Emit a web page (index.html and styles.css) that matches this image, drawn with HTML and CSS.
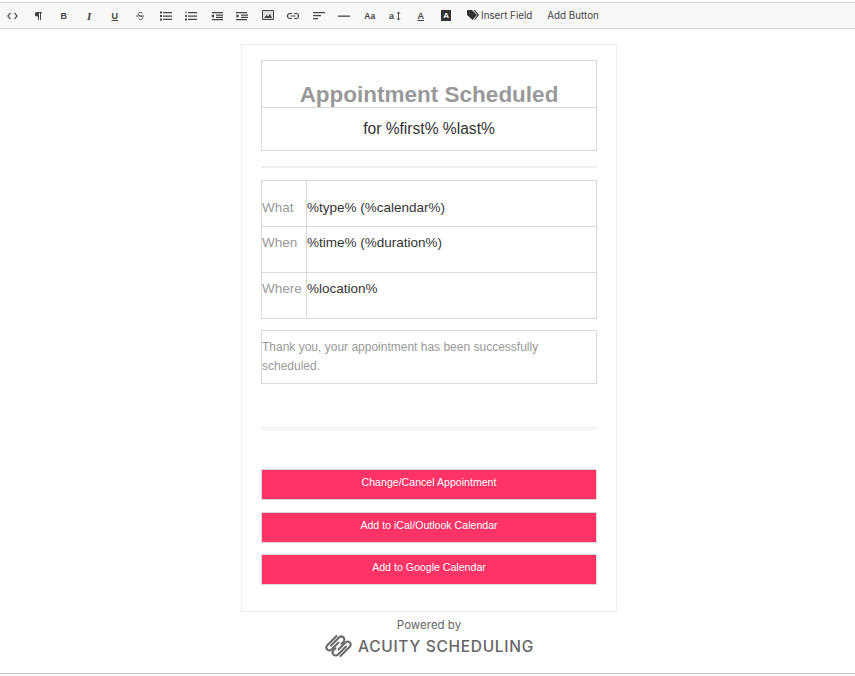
FILE: index.html
```html
<!DOCTYPE html>
<html lang="en">
  <head>
    <meta charset="UTF-8" />
    <meta name="viewport" content="width=device-width, initial-scale=1.0" />
    <title>Confirmation Page Editor</title>
    <link rel="stylesheet" href="styles.css">
  </head>

  <body>
    <div class="toolbar">
      <span class="tool">
        <svg width="11" height="8" viewBox="0 0 11 8" fill="none" stroke="#555" stroke-width="1.200"><path d="M3.500 1L.8 4l2.700 3M7.500 1l2.700 3-2.700 3"/></svg>
      </span>
      <span class="tool">
        <svg width="12" height="12" viewBox="0 0 12 12"><path d="M5 2h5v1H9v7H8V3H7v7H6V6.500H5a2.200 2.200 0 0 1 0-4.500z" fill="#444"/></svg>
      </span>
      <span class="tool tool-letter">B</span>
      <span class="tool tool-letter tool-i">I</span>
      <span class="tool tool-letter tool-u">U</span>
      <span class="tool">
        <svg width="12" height="12" viewBox="0 0 12 12" fill="none" stroke="#555"><path d="M8.500 3.500C8 2.300 6 2 5 2.700S3.800 4.700 5 5.300L8 6.700c1 .6 .8 1.800 0 2.400S5 9.800 4.500 8.500M2 6h8"/></svg>
      </span>
      <span class="tool">
        <svg width="12" height="12" viewBox="0 0 12 12" fill="#444"><path d="M0 1.500h2v2H0zM0 5h2v2H0zM0 8.500h2v2H0zM3 2h9v1.300H3zM3 5.400h9v1.300H3zM3 8.800h9v1.300H3z"/></svg>
      </span>
      <span class="tool">
        <svg width="12" height="12" viewBox="0 0 12 12" fill="#444"><path d="M.5 1.500h1v2h-1zM0 5h2v.7H.8v.6H2V7H0zM0 8.500h2v2H0zM3 2h9v1.300H3zM3 5.400h9v1.300H3zM3 8.800h9v1.300H3z"/></svg>
      </span>
      <span class="tool">
        <svg width="12" height="12" viewBox="0 0 12 12" fill="#444"><path d="M1 2h11v1.300H1zM5 4.400h7v1.300H5zM5 6.700h7V8H5zM1 9h11v1.300H1zM0 6l3-2v4z"/></svg>
      </span>
      <span class="tool">
        <svg width="12" height="12" viewBox="0 0 12 12" fill="#444"><path d="M0 2h11v1.300H0zM5 4.400h7v1.300H5zM5 6.700h7V8H5zM0 9h11v1.300H0zM3.500 6l-3-2v4z"/></svg>
      </span>
      <span class="tool">
        <svg width="12" height="11" viewBox="0 0 12 11"><path d="M.5.500h11v9H.5z" fill="#ddd" stroke="#444"/><path d="M2 8l2.500-3 1.500 1.500L8 4l2 4z" fill="#444"/></svg>
      </span>
      <span class="tool">
        <svg width="12" height="12" viewBox="0 0 12 12" fill="none" stroke="#444" stroke-width="1.200"><path d="M5 3.500H3a2.500 2.500 0 0 0 0 5h2M7 3.500h2a2.500 2.500 0 0 1 0 5H7M3.500 6h5"/></svg>
      </span>
      <span class="tool">
        <svg width="12" height="12" viewBox="0 0 12 12" fill="#444"><path d="M0 2h12v1.300H0zM0 5h8v1.300H0zM0 8h5v1.300H0z"/></svg>
      </span>
      <span class="tool">
        <svg width="12" height="12" viewBox="0 0 12 12" fill="#444"><path d="M0 5.500h12v1.300H0z"/></svg>
      </span>
      <span class="tool tool-aa">Aa</span>
      <span class="tool">
        <svg width="13" height="12" viewBox="0 0 13 12"><text x="0" y="9" class="tool-svg-text">a</text><path d="M9.500 1.500l2 2H10v5h1.500l-2 2-2-2H9v-5H7.500z" fill="#555"/></svg>
      </span>
      <span class="tool tool-letter tool-color">A</span>
      <span class="tool"><span class="tool-bg">A</span></span>
      <span class="tool-text tool-field">
        <svg width="12" height="11" viewBox="0 0 12 11" fill="#333"><path d="M0 0h5l5 5-4.500 5L0 5zM6.500 0H8l4 5-4 5H7l3.500-5z"/></svg>
        Insert Field
      </span>
      <span class="tool-text tool-add">Add Button</span>
    </div>

    <div class="page">
      <div class="card">
        <div class="heading-box">
          <h1 class="heading-title">Appointment Scheduled</h1>
          <p class="heading-sub">for %first% %last%</p>
        </div>

        <hr class="rule" />

        <table class="details">
          <tr class="row-first">
            <td class="label">What</td>
            <td>%type% (%calendar%)</td>
          </tr>
          <tr>
            <td class="label">When</td>
            <td>%time% (%duration%)</td>
          </tr>
          <tr>
            <td class="label">Where</td>
            <td>%location%</td>
          </tr>
        </table>

        <p class="thanks">Thank you, your appointment has been successfully scheduled.</p>

        <hr class="rule-double" />

        <div class="buttons">
          <a class="btn" href="#">Change/Cancel Appointment</a>
          <a class="btn" href="#">Add to iCal/Outlook Calendar</a>
          <a class="btn" href="#">Add to Google Calendar</a>
        </div>
      </div>

      <div class="powered">
        <p class="powered-by">Powered by</p>
        <div class="acuity">
          <svg width="29" height="24" viewBox="0 0 28 24" fill="none" stroke="#666" stroke-width="2" stroke-linecap="round" stroke-linejoin="round">
            <path d="M12 2L2.500 11.500A3 3 0 0 0 6.700 15.700L14 8.500"/>
            <path d="M6.500 11.500L14.500 3.500A3 3 0 0 1 19 7.700L17 9.700"/>
            <path d="M16 22L25.500 12.500A3 3 0 0 0 21.300 8.300L14 15.500"/>
            <path d="M21.500 12.500L13.500 20.500A3 3 0 0 1 9 16.300L11 14.300"/>
          </svg>
          <span class="acuity-name">ACUITY SCHEDULING</span>
        </div>
      </div>
    </div>

    <div class="bottom-line"></div>
  </body>
</html>
```

FILE: styles.css
```css
body {
  font-family: "Liberation Sans", Arial, sans-serif;
  margin: 0;
  padding: 0;
  background-color: #fff;
  height: 676px;
  overflow: hidden;
}

.toolbar {
  display: flex;
  align-items: center;
  height: 25px;
  margin-top: 2px;
  background-color: #f8f8f8;
  border-top: 1px solid #d4d4d4;
  border-bottom: 1px solid #d4d4d4;
  color: #333;
}

.tool {
  display: flex;
  align-items: center;
  justify-content: center;
  width: 25.500px;
  height: 24px;
  flex: none;
  color: #444;
}

.tool-letter {
  font-size: 9px;
  font-weight: bold;
}

.tool-i {
  font-family: "Liberation Serif", serif;
  font-style: italic;
  font-size: 11px;
}

.tool-u,
.tool-color {
  text-decoration: underline;
}

.tool-aa {
  font-size: 8.500px;
  font-weight: bold;
}

.tool-svg-text {
  font-size: 9px;
  font-weight: bold;
  fill: #444;
}

.tool-bg {
  display: block;
  width: 10px;
  height: 11px;
  line-height: 11px;
  text-align: center;
  background-color: #333;
  color: #fff;
  font-size: 8px;
  font-weight: bold;
}

.tool-text {
  font-family: Inter, sans-serif;
  font-size: 9.800px;
  color: #444;
  white-space: nowrap;
}

.tool-field {
  display: flex;
  align-items: center;
  gap: 2px;
  margin-left: 8px;
}

.tool-add {
  margin-left: 15px;
}

.page {
  width: 376px;
  margin: 15px 0 0 241px;
}

.card {
  box-sizing: border-box;
  height: 568px;
  padding: 15px 19px 0;
  border: 1px solid #eee;
}

.heading-box {
  border: 1px solid #d9d9d9;
}

.heading-title {
  box-sizing: border-box;
  height: 47px;
  margin: 0;
  padding-top: 21px;
  line-height: 26px;
  font-size: 22.500px;
  font-weight: bold;
  color: #999;
  text-align: center;
  border-bottom: 1px solid #d9d9d9;
}

.heading-sub {
  margin: 0;
  height: 42px;
  line-height: 42px;
  font-size: 15.600px;
  color: #333;
  text-align: center;
}

.rule {
  height: 2px;
  margin: 15px 0 12px;
  border: none;
  background-color: #eee;
}

.details {
  width: 100%;
  border-collapse: collapse;
  font-size: 13.500px;
  color: #333;
}

.details td {
  box-sizing: border-box;
  height: 46px;
  padding: 6px 0 0;
  border: 1px solid #d9d9d9;
  line-height: 20px;
  vertical-align: top;
}

.details .row-first td {
  padding-top: 17px;
}

.details .label {
  width: 45px;
  color: #999;
}

.thanks {
  height: 45px;
  margin: 11px 0 0;
  padding-top: 7px;
  border: 1px solid #d9d9d9;
  font-size: 12px;
  line-height: 19px;
  color: #999;
}

.rule-double {
  height: 1px;
  margin: 43px 0 39px;
  border: none;
  border-top: 1px solid #eee;
  border-bottom: 1px solid #eee;
}

.buttons {
  display: flex;
  flex-direction: column;
  gap: 11.500px;
}

.btn {
  box-sizing: border-box;
  display: block;
  height: 31px;
  padding-top: 6px;
  background-color: #ff3366;
  border: 1px solid #d9d9d9;
  color: #fff;
  font-size: 10.600px;
  line-height: 13px;
  text-align: center;
  text-decoration: none;
}

.powered {
  text-align: center;
  color: #666;
}

.powered-by {
  margin: 7px 0 0;
  font-family: Inter, sans-serif;
  font-size: 11.500px;
  line-height: 13px;
}

.acuity {
  display: flex;
  align-items: center;
  justify-content: center;
  gap: 5px;
  margin-top: 2px;
}

.acuity-name {
  font-family: Inter, sans-serif;
  font-size: 15.500px;
  font-weight: 500;
  letter-spacing: 0.700px;
  color: #666;
}

.bottom-line {
  margin-top: 15px;
  border-top: 1px solid #c4c4c4;
}
```
